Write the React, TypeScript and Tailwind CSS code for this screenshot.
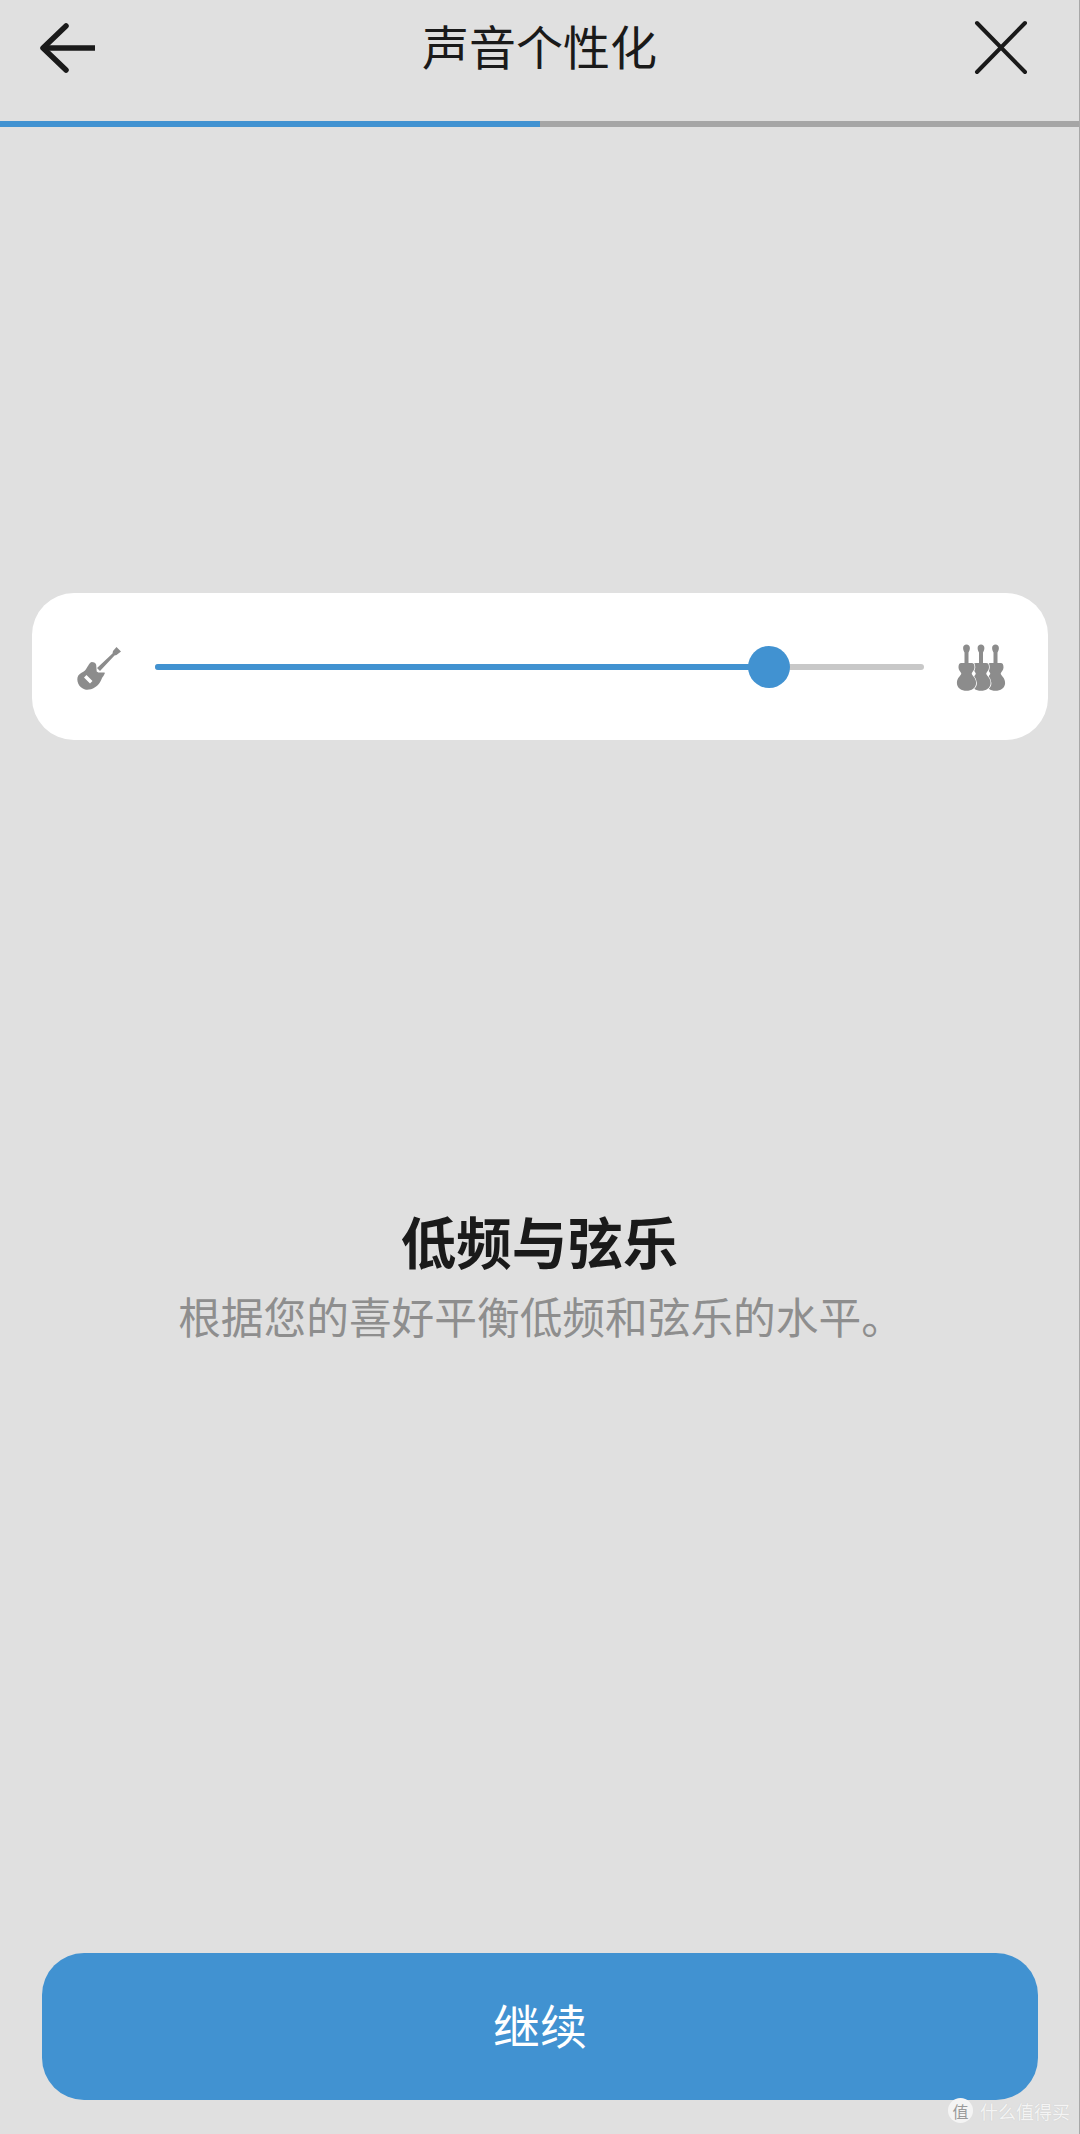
const FONT = "font-['Noto_Sans_CJK_SC','Noto_Sans',sans-serif]";

function BackIcon() {
  return (
    <svg width="60" height="56" viewBox="0 0 60 56" fill="none" stroke="#1a1a1a" strokeWidth="5.5" strokeLinecap="round" strokeLinejoin="round">
      <path d="M5 28 L57 28" strokeLinecap="butt" />
      <path d="M28 6 L5 28 L28 50" />
    </svg>
  );
}

function CloseIcon() {
  return (
    <svg width="56" height="56" viewBox="0 0 56 56" fill="none" stroke="#1a1a1a" strokeWidth="4" strokeLinecap="round">
      <path d="M4 3 L52 52" />
      <path d="M52 3 L4 52" />
    </svg>
  );
}

function GuitarIcon() {
  return (
    <svg width="56" height="56" viewBox="0 0 56 56" fill="#8c8c8c">
      <path d="M46.5 8 L51 12.5 L46.5 16 L44.5 16.5 L30 32 L27 29 L42.5 14.5 L43 12 Z" />
      <path
        fillRule="evenodd"
        d="M21.7 23 C24 23 26 24 26.2 26 L26.7 32.5 C29 34.5 32 33 35 33.8 C34.5 36 32.5 38 31.7 39.8 C30.5 43 28 47 25 48.2 C21.5 50.5 18 51 15 50.5 C12 49.5 9.5 47.5 8.3 44.8 C7 41.5 7 38.5 8.3 36.5 C10 34 13 33.5 15 31.5 C16.5 30 17 28 18.3 26.5 C19 25 20 23.5 21.7 23 Z M16.5 36 L14 38.5 L20 44.5 L22.5 42 Z"
      />
    </svg>
  );
}

const VIOLIN =
  "M0 5.5 C2 5.5 3.4 7 3.4 9 C3.4 11 2.4 12.5 2 13.5 L2 24 L5 24 C7.5 24 8 26 8 28.5 C8 31 6 32.5 5.2 34.5 C5.2 36.5 9.6 38.5 9.6 44 C9.6 49 5 51.8 0 51.8 C-5 51.8 -9.6 49 -9.6 44 C-9.6 38.5 -5.2 36.5 -5.2 34.5 C-6 32.5 -8 31 -8 28.5 C-8 26 -7.5 24 -5 24 L-2 24 L-2 13.5 C-2.4 12.5 -3.4 11 -3.4 9 C-3.4 7 -2 5.5 0 5.5 Z";

function StringsIcon() {
  return (
    <svg width="56" height="56" viewBox="0 0 56 56" fill="#8c8c8c" stroke="#ffffff" strokeWidth="1.6" style={{ paintOrder: "stroke" }}>
      <path d={VIOLIN} transform="translate(42.5 0)" />
      <path d={VIOLIN} transform="translate(28 0)" />
      <path d={VIOLIN} transform="translate(13.5 0)" />
    </svg>
  );
}

export default function App() {
  return (
    <div className={`relative flex h-[2134px] w-[1080px] flex-col overflow-hidden border-r border-[#a8a8a8] bg-[#e0e0e0] ${FONT}`}>
      <header className="grid h-[121px] grid-cols-[1fr_auto_1fr] items-start px-[38px] pt-[20px]">
        <button className="h-[56px] w-[60px]">
          <BackIcon />
        </button>
        <h1 className="text-[47px] leading-[49px] font-normal text-[#1a1a1a]">声音个性化</h1>
        <button className="mr-[12px] h-[56px] w-[56px] justify-self-end">
          <CloseIcon />
        </button>
      </header>

      <div className="flex h-[6px] bg-[#a6a6a6]">
        <div className="w-[540px] bg-[#4192d1]" />
      </div>

      <section className="mt-[466px] ml-[32px] flex h-[147px] w-[1016px] items-center rounded-[42px] bg-white pl-[38px] pr-[39px]">
        <GuitarIcon />
        <div className="relative mx-[29px] h-[6px] flex-1 rounded-full bg-[#c8c8c8]">
          <div className="h-full w-[614px] rounded-full bg-[#4192d1]" />
          <div className="absolute top-[-18px] left-[593px] h-[42px] w-[42px] rounded-full bg-[#4192d1]" />
        </div>
        <StringsIcon />
      </section>

      <div className="mt-[462px] flex flex-col items-center">
        <h2 className="text-[55.5px] leading-[76px] font-bold text-[#1a1a1a]">低频与弦乐</h2>
        <p className="mt-[9px] ml-[3px] text-[42.7px] leading-[56px] text-[#8e8e8e]">根据您的喜好平衡低频和弦乐的水平。</p>
      </div>

      <button className="mt-auto mb-[34px] ml-[42px] h-[147px] w-[996px] rounded-[42px] bg-[#4192d1] pb-[4px] text-[47px] text-white">
        继续
      </button>

      <div className="absolute right-[9px] bottom-[11px] flex items-center gap-[7px]">
        <span className="flex h-[25px] w-[25px] items-center justify-center rounded-full bg-[#f4f4f4] text-[16px] leading-none text-[#9a9a9a]">
          值
        </span>
        <span className="text-[18px] leading-[24px] text-[#f4f4f4] [text-shadow:0_0_1px_#c4c4c4]">什么值得买</span>
      </div>
    </div>
  );
}
